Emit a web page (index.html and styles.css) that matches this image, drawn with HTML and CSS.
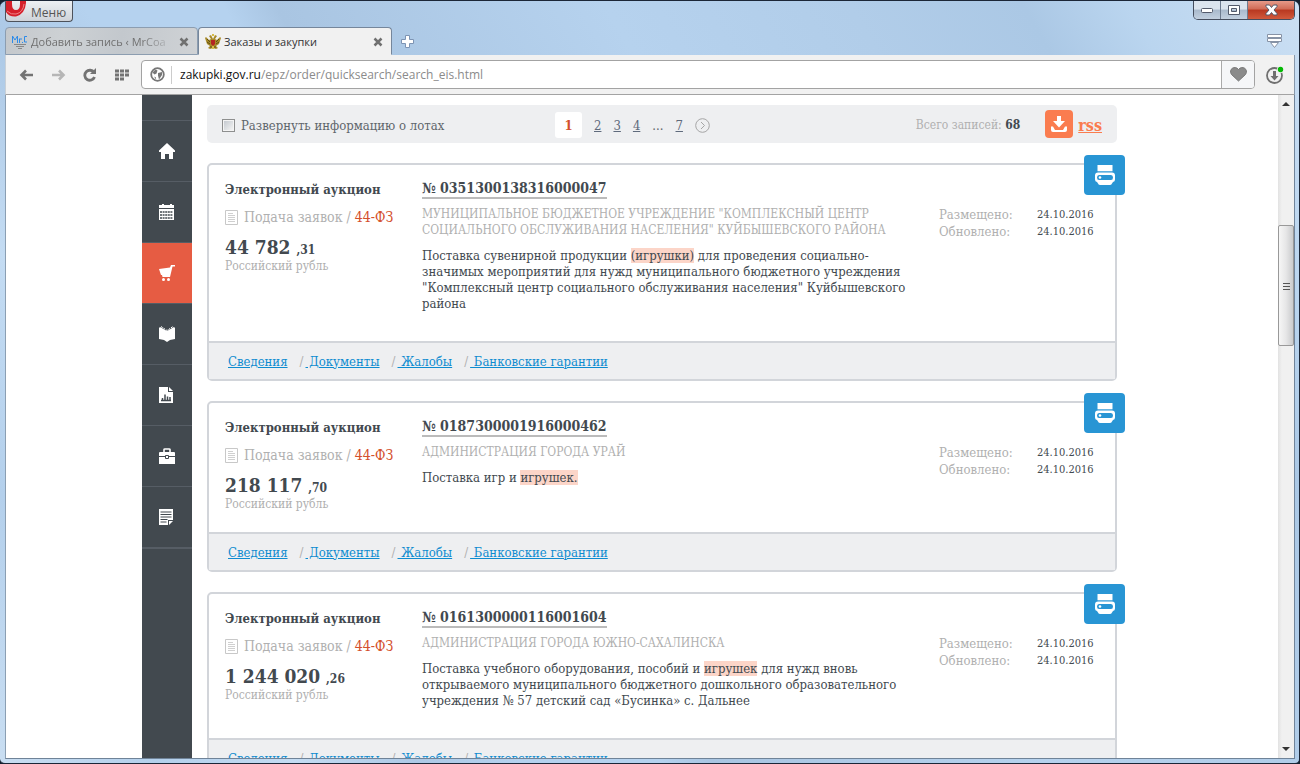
FILE: index.html
```html
<!DOCTYPE html>
<html lang="ru">
<head>
<meta charset="utf-8">
<title>Заказы и закупки</title>
<link rel="stylesheet" href="styles.css">
</head>
<body>
<svg class="defs" aria-hidden="true">
  <symbol id="printer" viewBox="0 0 20 20"><path fill="#fff" d="M2.500 0h15v6.300h-15z"/><path fill="#fff" fill-rule="evenodd" d="M3 7.500h14q3 0 3 3v4q0 2-2 2.500l-1 1.500Q16.500 20 14.500 20h-9Q3.500 20 3 18.500L2 17q-2-.5-2-2.500v-4q0-3 3-3zM4 10Q2 10 2 12.500T4 15h12q2 0 2-2.500T16 10z"/><circle cx="5" cy="12.500" r="1.300" fill="#fff"/></symbol>
  <symbol id="sheet" viewBox="0 0 13 15"><path fill="#fff" stroke="#c8c8c8" d="M.5.5h12v14H.5z"/><path stroke="#d0d0d0" d="M3 3.500h5M3 5.500h7M3 7.500h7M3 9.500h7M3 11.500h7"/></symbol>
</svg>
<div class="window">
  <header class="titlebar">
    <button class="menu"><svg width="21" height="17" viewBox="0 0 21 17"><path d="M0 0h6v3q0 6 4 6t4-6V0h6v2Q19 13 10 15.500 3 16 0 11z" fill="#d5202b"/><path d="M1 10q4 4 9 3 7-1.500 8-10" fill="none" stroke="#f08084"/></svg><span>Меню</span></button>
    <div class="controls">
      <button aria-label="Свернуть"><svg width="13" height="7"><rect x=".5" y="1.500" width="11" height="4" rx="1" fill="#fff" stroke="#535a6b"/></svg></button>
      <button aria-label="Развернуть"><svg width="13" height="11"><path fill="#fff" stroke="#535a6b" fill-rule="evenodd" d="M.5.5h11v9H.5zM3.500 3.500v3h5v-3z"/></svg></button>
      <button class="close" aria-label="Закрыть"><svg width="13" height="12" viewBox="0 0 13 12"><path d="M1 1h3.500l2 2.500L8.500 1H12v1.500L9 6l3 3.500V11H8.500l-2-2.500-2 2.500H1V9.500L4 6 1 2.500z" fill="#fff" stroke="#535a6b"/></svg></button>
    </div>
  </header>
  <nav class="tabs">
    <div class="tab"><svg width="16" height="16" viewBox="0 0 16 16"><path d="M.5 9V2l2.500 4 2.500-4v7M7.500 9V4.500M8 5h2M15 2.500h-2.500v5.500H15" fill="none" stroke="#2d8be8"/><path d="M10 8h1v1h-1z" fill="#2d8be8"/><path d="M2 10.500h12M4 12.500h8M6 14.500h4" stroke="#888"/></svg><span class="fade">Добавить запись ‹ MrCoa</span><button aria-label="Закрыть вкладку"><svg width="10" height="10"><path d="M1.500 1.500l7 7m0-7l-7 7" stroke="#707070" stroke-width="2.500"/></svg></button></div>
    <div class="tab active"><svg width="16" height="16" viewBox="0 0 16 16"><path d="M8 5 6 1 4 2l2 3-2 1-3-3-1 1 2 6 3 2-2 2 2 1 3-1 3 1 2-1-2-2 3-2 2-6-1-1-3 3-2-1 2-3-2-1z" fill="#a88a28"/><path d="M2 5l3 3M14 5l-3 3M2 8l3 2M14 8l-3 2M5 13h6" stroke="#5f4d13"/><path d="M6 6h4v4l-2 2-2-2z" fill="#b52522"/><path d="M7 0h2v2H7zM7 12h2v3H7z" fill="#d7bc46"/></svg><span>Заказы и закупки</span><button aria-label="Закрыть вкладку"><svg width="10" height="10"><path d="M1.500 1.500l7 7m0-7l-7 7" stroke="#707070" stroke-width="2.500"/></svg></button></div>
    <button class="plus" aria-label="Новая вкладка"><svg width="13" height="13"><path d="M4.500.5h4v4h4v4h-4v4h-4v-4h-4v-4h4z" fill="#fff" stroke="#7d94b4"/></svg></button>
    <button class="stack" aria-label="Закрытые вкладки"><svg width="16" height="15"><path d="M.5.5h14v3H.5zM.5 4.500h14v3H.5zM3.500 8.500h8l-4 5z" fill="#fff" stroke="#8793a6"/></svg></button>
  </nav>
  <div class="toolbar">
    <button class="tool" aria-label="Назад"><svg width="15" height="12"><path d="M14 6H3M7 1.500L2.500 6 7 10.500" fill="none" stroke="#737373" stroke-width="2.600"/></svg></button>
    <button class="tool" aria-label="Вперёд"><svg width="15" height="12"><path d="M1 6h11M8 1.500L12.500 6 8 10.500" fill="none" stroke="#b6b6b6" stroke-width="2.600"/></svg></button>
    <button class="tool" aria-label="Обновить"><svg width="14" height="14"><path d="M11 4.500A5 5 0 1 0 11.500 9" fill="none" stroke="#737373" stroke-width="2.800"/><path d="M13 0v6H7z" fill="#737373"/></svg></button>
    <button class="tool" aria-label="Экспресс-панель"><svg width="15" height="12"><path d="M0 2h15M0 6h15M0 10h9" stroke="#737373" stroke-width="3" stroke-dasharray="4 1"/></svg></button>
    <div class="address">
      <svg class="globe" width="15" height="15"><circle cx="7.500" cy="7.500" r="6.300" fill="#fff" stroke="#777" stroke-width="1.800"/><path d="M2.500 5.500l3-3 2 1-1 3-2 1zM8 6l4-1v3l-3 4.500-1-4zM4 9.500l2 1v2z" fill="#777"/></svg>
      <a class="url" href="#"><b>zakupki.gov.ru</b>/epz/order/quicksearch/search_eis.html</a>
      <button class="heart" aria-label="В закладки"><svg width="17" height="15" viewBox="0 0 17 15"><path d="M8.500 14L1.500 7.500C-2 2 5-2 8.500 2.500 12-2 19 2 15.500 7.500z" fill="#8b8b8b" stroke="#777"/></svg></button>
    </div>
    <button class="download" aria-label="Загрузки"><svg width="18" height="18"><circle cx="8.500" cy="9.500" r="7.500" fill="none" stroke="#707070" stroke-width="1.800"/><path d="M7 5h3v5h2.500l-4 4.500-4-4.500H7z" fill="#707070"/><circle cx="14.500" cy="3.500" r="3.500" fill="#f1f1f1"/><circle cx="14.500" cy="3.500" r="2.700" fill="#04b904"/></svg></button>
  </div>
  <div class="viewport">
    <div class="page">
      <nav class="side">
        <a href="#" aria-label="Главная"><svg width="16" height="16"><path d="M8 0l8 7.500V9h-2v7h-4v-5H6v5H2V9H0V7.500z" fill="#fff"/></svg></a>
        <a href="#" aria-label="Календарь"><svg width="16" height="16"><path d="M0 1h3V0h2v1h6V0h2v1h2v3H0zM0 5h15v11H0z" fill="#fff"/><path d="M1 8h13M1 11h13M1 14h13" stroke="#42494f" stroke-width="1.500" stroke-dasharray="2 .6"/></svg></a>
        <a href="#" class="current" aria-label="Закупки"><svg width="16" height="16"><path d="M0 4l11-1.500L12 0h4v1.500h-2.500L11 12H3.500L3 10H2z" fill="#fff"/><circle cx="4.500" cy="14.500" r="1.500" fill="#fff"/><circle cx="9.500" cy="14.500" r="1.500" fill="#fff"/></svg></a>
        <a href="#" aria-label="Справочники"><svg width="16" height="16"><path d="M0 2l1-1 7 4 7-4 1 1v11l-5 1-3 2-3-2-5-1z" fill="#fff"/><path d="M2 .5l6 4 6-4" fill="none" stroke="#fff" stroke-dasharray="2 1"/></svg></a>
        <a href="#" aria-label="Отчёты"><svg width="16" height="16"><path d="M0 0h9v5h5v11H0zM10 0l4 4h-4z" fill="#fff"/><path d="M2 13.500h10M3.500 13v-2M6 13V7.500M8.500 13V9.500M11 13v-3" stroke="#42494f" stroke-width="1.500"/></svg></a>
        <a href="#" aria-label="Портфель"><svg width="16" height="16"><path d="M5 4V1.500Q5 1 6 1h4q1 0 1 .5V4" fill="none" stroke="#fff" stroke-width="1.600"/><path d="M1 4h14q1 0 1 1v3H0V5q0-1 1-1zM0 9h16v7H0z" fill="#fff"/><path d="M6.500 7.500h3v3h-3z" fill="#fff" stroke="#42494f"/></svg></a>
        <a href="#" aria-label="Документы"><svg width="16" height="16"><path d="M0 0h14v11H9v5H0zM10 12h4l-4 4z" fill="#fff"/><path d="M1.500 3h11M1.500 5.500h11M1.500 8h11M1.500 10.500h7M1.500 13h6" stroke="#42494f"/></svg></a>
      </nav>
      <main class="results">
        <div class="pager">
          <label class="expand"><input type="checkbox">Развернуть информацию о лотах</label>
          <div class="pages"><span class="on">1</span><a href="#">2</a><a href="#">3</a><a href="#">4</a><span>...</span><a href="#">7</a><a href="#" aria-label="Далее"><svg width="15" height="15"><circle cx="7.500" cy="7.500" r="6.800" fill="none" stroke="#a5a5a5"/><path d="M6 4l3.500 3.500L6 11" fill="none" stroke="#a5a5a5"/></svg></a></div>
          <div class="total">Всего записей: <b>68</b></div>
          <a class="save" href="#" aria-label="Скачать"><svg width="16" height="16"><path d="M6 0h4v5h4l-6 6.500L2 5h4zM0 10.500h2L4 14h8l2-3.500h2V14q0 2-2 2H2q-2 0-2-2z" fill="#fff"/></svg></a>
          <a class="rss" href="#">rss</a>
        </div>

        <article class="card">
          <button class="print" aria-label="Печать"><svg width="20" height="20"><use href="#printer"/></svg></button>
          <div class="body">
            <div class="summary"><div class="type">Электронный аукцион</div><div class="status"><svg width="13" height="15"><use href="#sheet"/></svg><span>Подача заявок / <em>44-ФЗ</em></span></div><div class="price">44 782 <small>,31</small></div><div class="currency">Российский рубль</div></div>
            <div class="info"><a class="number" href="#">№ 0351300138316000047</a><div class="org">МУНИЦИПАЛЬНОЕ БЮДЖЕТНОЕ УЧРЕЖДЕНИЕ "КОМПЛЕКСНЫЙ ЦЕНТР СОЦИАЛЬНОГО ОБСЛУЖИВАНИЯ НАСЕЛЕНИЯ" КУЙБЫШЕВСКОГО РАЙОНА</div><p>Поставка сувенирной продукции <mark>(игрушки)</mark> для проведения социально-значимых мероприятий для нужд муниципального бюджетного учреждения "Комплексный центр социального обслуживания населения" Куйбышевского района</p></div>
            <dl class="dates"><dt>Размещено:</dt><dd>24.10.2016</dd><dt>Обновлено:</dt><dd>24.10.2016</dd></dl>
          </div>
          <footer><a href="#">Сведения</a><i>/</i><a href="#">&nbsp;Документы</a><i>/</i><a href="#">&nbsp;Жалобы</a><i>/</i><a href="#">&nbsp;Банковские гарантии</a></footer>
        </article>

        <article class="card">
          <button class="print" aria-label="Печать"><svg width="20" height="20"><use href="#printer"/></svg></button>
          <div class="body">
            <div class="summary"><div class="type">Электронный аукцион</div><div class="status"><svg width="13" height="15"><use href="#sheet"/></svg><span>Подача заявок / <em>44-ФЗ</em></span></div><div class="price">218 117 <small>,70</small></div><div class="currency">Российский рубль</div></div>
            <div class="info"><a class="number" href="#">№ 0187300001916000462</a><div class="org">АДМИНИСТРАЦИЯ ГОРОДА УРАЙ</div><p>Поставка игр и <mark>игрушек.</mark></p></div>
            <dl class="dates"><dt>Размещено:</dt><dd>24.10.2016</dd><dt>Обновлено:</dt><dd>24.10.2016</dd></dl>
          </div>
          <footer><a href="#">Сведения</a><i>/</i><a href="#">&nbsp;Документы</a><i>/</i><a href="#">&nbsp;Жалобы</a><i>/</i><a href="#">&nbsp;Банковские гарантии</a></footer>
        </article>

        <article class="card">
          <button class="print" aria-label="Печать"><svg width="20" height="20"><use href="#printer"/></svg></button>
          <div class="body">
            <div class="summary"><div class="type">Электронный аукцион</div><div class="status"><svg width="13" height="15"><use href="#sheet"/></svg><span>Подача заявок / <em>44-ФЗ</em></span></div><div class="price">1 244 020 <small>,26</small></div><div class="currency">Российский рубль</div></div>
            <div class="info"><a class="number" href="#">№ 0161300000116001604</a><div class="org">АДМИНИСТРАЦИЯ ГОРОДА ЮЖНО-САХАЛИНСКА</div><p>Поставка учебного оборудования, пособий и <mark>игрушек</mark> для нужд вновь открываемого муниципального бюджетного дошкольного образовательного учреждения № 57 детский сад «Бусинка» с. Дальнее</p></div>
            <dl class="dates"><dt>Размещено:</dt><dd>24.10.2016</dd><dt>Обновлено:</dt><dd>24.10.2016</dd></dl>
          </div>
          <footer><a href="#">Сведения</a><i>/</i><a href="#">&nbsp;Документы</a><i>/</i><a href="#">&nbsp;Жалобы</a><i>/</i><a href="#">&nbsp;Банковские гарантии</a></footer>
        </article>
      </main>
    </div>
    <div class="scroll" aria-hidden="true">
      <svg width="9" height="5"><path d="M0 5l4-4 4 4z" fill="#333"/></svg>
      <div class="track"><div class="thumb"><svg width="7" height="8"><path d="M0 1.500h7M0 4.500h7M0 7.500h7" stroke="#555"/></svg></div></div>
      <svg width="9" height="5"><path d="M0 0h8L4 4z" fill="#333"/></svg>
    </div>
  </div>
</div>
</body>
</html>
```
FILE: styles.css
```css
* { box-sizing: border-box; }
body { margin: 0; background: #14202f; font-family: "DejaVu Serif Condensed", "DejaVu Serif", serif; font-size: 13px; color: #42494f; }
button { padding: 0; border: 0; background: none; display: flex; align-items: center; justify-content: center; font: inherit; color: inherit; }
svg { display: block; flex: none; }
.defs { position: absolute; width: 0; height: 0; }

/* window frame */
.window { height: 100vh; display: flex; flex-direction: column; padding: 0 4px 4px 5px; border: 1px solid #1b2637; border-left: 0; border-radius: 7px 7px 5px 5px; overflow: hidden;
  background: linear-gradient(60deg, #c9def2 0, #b4d0ec 9%, #c4dcf3 17%, #adc9e6 24%, #b5d2ef 30%, #b5d2ef 38%, #a9c5e2 41%, #b6d2ee 60%, #b1cde9 74%, #abc8e5 84%, #bad5ef 90%, #cbdff3 100%); }
.titlebar, .tabs, .toolbar { font-family: "Open Sans", sans-serif; }
.titlebar { flex: none; height: 26px; display: flex; justify-content: space-between; align-items: flex-start; }
.menu { height: 21px; width: 68px; align-items: flex-start; justify-content: flex-start; gap: 4px; border: 1px solid #4d525b; border-top: 0; border-radius: 0 0 4px 4px; background: linear-gradient(#edf0f3, #cfd3d9); font-size: 12px; line-height: 24px; color: #555; overflow: hidden; }
.controls { display: flex; border: 1px solid #454d5d; border-top: 0; border-radius: 0 0 5px 5px; overflow: hidden; }
.controls button { width: 27px; height: 18px; border-right: 1px solid #6d7b8f; background: linear-gradient(#dbe4ee 45%, #a9b9cc 50%, #c2d0df); }
.controls .close { width: 46px; border: 0; background: linear-gradient(#e69a89 0, #d06b56 45%, #b83820 50%, #d15a3c); }
.tabs { flex: none; height: 28px; display: flex; align-items: stretch; }
.tab { width: 193px; display: flex; align-items: center; gap: 3px; padding: 1px 8px 0 6px; border: 1px solid #8c9db0; border-radius: 4px 4px 0 0; background: linear-gradient(100deg, #c4c8cc, #cdd1d4 30%, #c3c8cd 60%, #cfd2d5); font-size: 11px; color: #707070; }
.tab span { flex: 1; white-space: nowrap; }
.fade { mask-image: linear-gradient(90deg, #000 75%, transparent); }
.tab.active { width: 194px; background: #f1f1f1; border-color: #75869b; border-bottom-color: #f1f1f1; color: #333; }
.plus { margin-left: 9px; }
.stack { margin-left: auto; margin-right: 12px; }
.toolbar { flex: none; height: 40px; display: flex; align-items: center; background: #f1f1f1; border-bottom: 1px solid #a3a3a3; border-right: 1px solid #8798ab; border-left: 1px solid #c9d0d7; padding-left: 4px; }
.tool { width: 32px; height: 30px; }
.address { flex: 1; display: flex; align-items: center; height: 29px; margin-left: 3px; border: 1px solid #a3a3a3; border-radius: 4px; background: #fff; overflow: hidden; }
.globe { margin: 0 6px 0 8px; }
.url { flex: 1; border-left: 1px solid #ccc; padding-left: 8px; line-height: 18px; color: #8b8b8b; text-decoration: none; font-size: 12px; }
.url b { color: #111; font-weight: 400; }
.heart { width: 33px; height: 27px; border-left: 1px solid #aaa; background: #f5f6f8; }
.download { width: 39px; }
.viewport { flex: 1; min-height: 0; display: flex; background: #fff; border-bottom: 1px solid #6f8398; border-left: 1px solid #8b9fb3; overflow: hidden; }
.scroll { width: 17px; flex: none; display: flex; flex-direction: column; align-items: center; padding: 6px 0; background: linear-gradient(90deg, #e2e2e2, #f0f0f0 4px); border-right: 1px solid #70849a; }
.track { flex: 1; width: 100%; padding-top: 119px; }
.thumb { height: 121px; display: flex; align-items: center; justify-content: center; border: 1px solid #999; border-radius: 2px; background: linear-gradient(90deg, #f6f6f6, #e6e6e7 50%, #cacbcd); }

/* page */
.page { flex: 1; max-width: 1000px; margin: 0 auto; display: flex; align-items: flex-start; }
.side { width: 50px; flex: none; height: 100vh; padding-top: 25px; background: #42494f; }
.side a { height: 61px; display: flex; align-items: center; justify-content: center; border-top: 1px solid #565d65; padding-bottom: 1px; }
.side a:last-child { height: 63px; border-bottom: 2px solid #565d65; }
.side .current { background: #e65c43; }
.results { flex: 1; min-width: 0; padding: 10px 25px 0 15px; }
.pager { height: 38px; display: flex; align-items: center; padding: 2px 15px 0; border-radius: 5px; background: #eeeff1; color: #5f666c; margin-bottom: 20px; }
.expand { display: flex; align-items: center; gap: 6px; width: 333px; }
.expand input { appearance: none; width: 13px; height: 13px; margin: 0; border: 1px solid #8e8f8f; background: linear-gradient(135deg, #c5cad0, #f3f3f3) content-box, #f4f4f4; padding: 1px; }
.pages { flex: 1; display: flex; align-items: center; gap: 12px; }
.pages a { color: #5f6a7c; }
.pages .on { width: 27px; height: 26px; border-radius: 3px; background: #fff; color: #d4502c; font-weight: 700; line-height: 27px; text-align: center; }
.total { color: #b0b0b0; font-size: 12px; }
.total b { color: #42494f; }
.save { width: 28px; height: 28px; display: flex; align-items: center; justify-content: center; margin: 0 5px 3px 25px; border-radius: 4px; background: #fa7c4f; }
.rss { color: #fa7c4f; font-weight: 700; font-size: 16px; }
.card { position: relative; border: 2px solid #d2d5da; border-radius: 5px; margin-bottom: 20px; background: #fff; }
.print { position: absolute; right: -10px; top: -10px; width: 41px; height: 40px; border-radius: 4px; background: #2895d4; }
.body { display: flex; }
.summary { width: 213px; flex: none; padding: 16px 0 21px 16px; }
.type { font-weight: 700; line-height: 18px; }
.status { display: flex; align-items: center; gap: 6px; margin: 8px 0; line-height: 20px; font-size: 14px; color: #b0b0b0; }
.status span { white-space: nowrap; }
.status em { font-style: normal; color: #d4502c; }
.price { font-size: 19px; font-weight: 700; line-height: 24px; }
.price small { font-size: 12px; line-height: 12px; }
.currency { font-size: 12px; line-height: 14px; color: #b0b0b0; }
.info { flex: 1; min-width: 0; padding: 14px 24px 29px 0; }
.number { display: inline-block; font-size: 14px; line-height: 18px; font-weight: 700; color: #42494f; text-decoration: none; border-bottom: 2px solid #bbb; vertical-align: top; }
.org { margin-top: 7px; font-size: 12px; line-height: 16px; color: #b0b0b0; }
.info p { margin: 10px 0 0; line-height: 16px; }
mark { background: #fcd5c8; color: inherit; }
.dates { display: grid; grid-template-columns: 98px 78px; align-content: start; margin: 0; padding-top: 41px; line-height: 17px; }
.dates dt { color: #b0b0b0; }
.dates dd { margin: 0; font-size: 11px; }
.card footer { height: 38px; display: flex; align-items: center; padding-left: 19px; border-top: 2px solid #d2d5da; background: #eeeff1; }
.card footer a { color: #0e8cd0; }
.card footer i { font-style: normal; color: #b0b0b0; margin: 0 2px 0 12px; }
```
